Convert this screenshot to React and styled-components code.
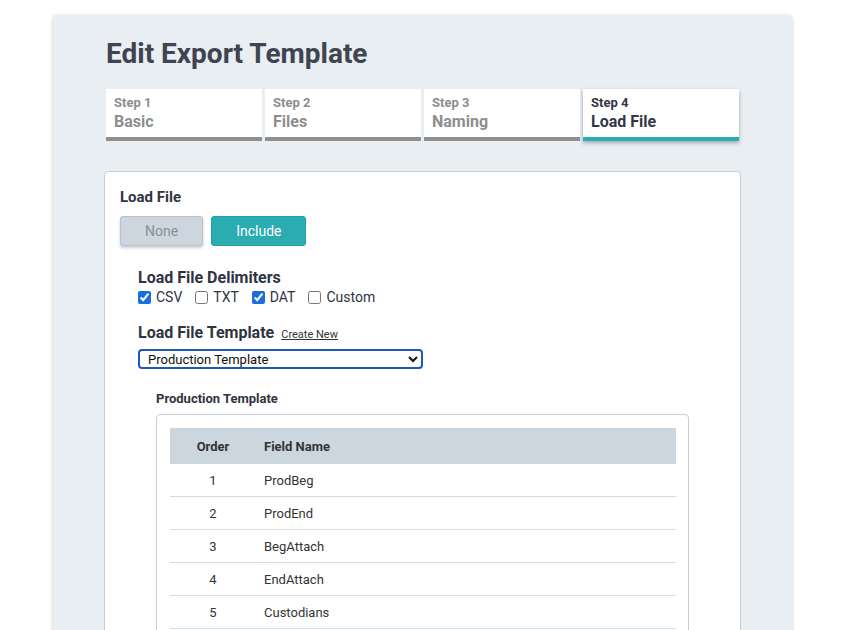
import React, { useState } from 'react';
import styled, { createGlobalStyle } from 'styled-components';

const Global = createGlobalStyle`
  body { margin: 0; background: #fff; font-family: Roboto, "Liberation Sans", sans-serif; color: #2f3441; }
`;

const Page = styled.div`
  padding: 15px 68px 0 53px;
  height: 630px;
  box-sizing: border-box;
  overflow: hidden;
`;

const Card = styled.div`
  background: #e8eef2;
  border-radius: 4px;
  box-shadow: 0 1px 4px rgba(0, 0, 0, 0.2);
  padding: 22px 51px 40px 51px;
  min-height: 700px;
`;

const Title = styled.h1`
  margin: 0 0 19px 2px;
  font-size: 28px;
  font-weight: 700;
  color: #3f4450;
`;

const Steps = styled.div`
  display: grid;
  grid-template-columns: repeat(4, 156px);
  gap: 3px;
  margin: 0 2px 30px 2px;
`;

const Step = styled.div`
  background: #fff;
  height: 52px;
  padding: 6px 8px 0;
  box-sizing: border-box;
  border-bottom: 4px solid ${p => (p.$active ? '#2aacb0' : '#8f8f8f')};
  color: ${p => (p.$active ? '#323745' : '#8e8e8e')};
  box-shadow: ${p => (p.$active ? '0 2px 4px rgba(0,0,0,0.3)' : 'none')};
`;

const StepNum = styled.div`
  font-size: 13px;
  font-weight: 700;
`;

const StepName = styled.div`
  font-size: 16px;
  font-weight: 700;
  margin-top: 2px;
`;

const Panel = styled.div`
  background: #fff;
  border: 1px solid #c6cfd8;
  border-radius: 4px;
  padding: 16px 15px 20px;
`;

const Label = styled.div`
  font-size: 15px;
  font-weight: 700;
  margin-bottom: 10px;
`;

const Toggle = styled.div`
  display: flex;
  gap: 8px;
  margin-bottom: 22px;
`;

const ToggleButton = styled.button`
  font-family: inherit;
  font-size: 14px;
  height: 30px;
  padding: 0 24px;
  border-radius: 3px;
  border: 1px solid ${p => (p.$on ? '#23a2a5' : '#b9c2cb')};
  background: ${p => (p.$on ? '#2aacb0' : '#cdd6de')};
  color: ${p => (p.$on ? '#fff' : '#8a8f96')};
  box-shadow: ${p => (p.$on ? 'none' : '0 2px 3px rgba(0,0,0,0.2)')};
  min-width: ${p => (p.$on ? '95px' : '83px')};
`;

const Section = styled.div`
  padding-left: 18px;
`;

const Heading = styled.div`
  font-size: 16px;
  font-weight: 700;
  display: flex;
  align-items: baseline;
  gap: 7px;
`;

const SmallLink = styled.a`
  font-size: 11px;
  font-weight: 400;
  color: #333;
  text-decoration: underline;
`;

const Checks = styled.div`
  display: flex;
  gap: 13px;
  font-size: 14px;
  margin: 2px 0 18px;
`;

const Check = styled.label`
  display: flex;
  align-items: center;
  gap: 5px;
  input { margin: 0; width: 13px; height: 13px; accent-color: #1a6fe0; }
`;

const Select = styled.select`
  font-family: inherit;
  font-size: 13px;
  width: 285px;
  height: 20px;
  margin-top: 7px;
  border: 2px solid #1b5bb8;
  border-radius: 4px;
  background: #fff;
  color: #111;
  padding: 0 4px;
`;

const SubTitle = styled.div`
  font-size: 13px;
  font-weight: 700;
  margin: 22px 0 8px 36px;
`;

const TableBox = styled.div`
  margin-left: 36px;
  width: 533px;
  border: 1px solid #c6cfd8;
  border-radius: 4px;
  padding: 13px 12px 0 13px;
  box-sizing: border-box;
`;

const Table = styled.table`
  width: 100%;
  border-collapse: collapse;
  font-size: 13px;
  th { background: #ccd6de; height: 36px; padding: 0; text-align: left; font-weight: 700; color: #333; }
  td { height: 32px; padding: 0; border-bottom: 1px solid #d5dce2; color: #333; }
  th:first-child, td:first-child { text-align: center; width: 86px; }
  th:last-child, td:last-child { padding-left: 8px; }
`;

const fields = ['ProdBeg', 'ProdEnd', 'BegAttach', 'EndAttach', 'Custodians', 'FileName'];

export default function App() {
  const [include, setInclude] = useState(true);
  return (
    <Page>
      <Global />
      <Card>
        <Title>Edit Export Template</Title>
        <Steps>
          {['Basic', 'Files', 'Naming', 'Load File'].map((s, i) => (
            <Step key={s} $active={i === 3}>
              <StepNum>Step {i + 1}</StepNum>
              <StepName>{s}</StepName>
            </Step>
          ))}
        </Steps>
        <Panel>
          <Label>Load File</Label>
          <Toggle>
            <ToggleButton $on={!include} onClick={() => setInclude(false)}>None</ToggleButton>
            <ToggleButton $on={include} onClick={() => setInclude(true)}>Include</ToggleButton>
          </Toggle>
          <Section>
            <Heading>Load File Delimiters</Heading>
            <Checks>
              <Check><input type="checkbox" defaultChecked />CSV</Check>
              <Check><input type="checkbox" />TXT</Check>
              <Check><input type="checkbox" defaultChecked />DAT</Check>
              <Check><input type="checkbox" />Custom</Check>
            </Checks>
            <Heading>Load File Template <SmallLink href="#">Create New</SmallLink></Heading>
            <Select defaultValue="p"><option value="p">Production Template</option></Select>
          </Section>
          <SubTitle>Production Template</SubTitle>
          <TableBox>
            <Table>
              <thead><tr><th>Order</th><th>Field Name</th></tr></thead>
              <tbody>
                {fields.map((f, i) => (
                  <tr key={f}><td>{i + 1}</td><td>{f}</td></tr>
                ))}
              </tbody>
            </Table>
          </TableBox>
        </Panel>
      </Card>
    </Page>
  );
}
